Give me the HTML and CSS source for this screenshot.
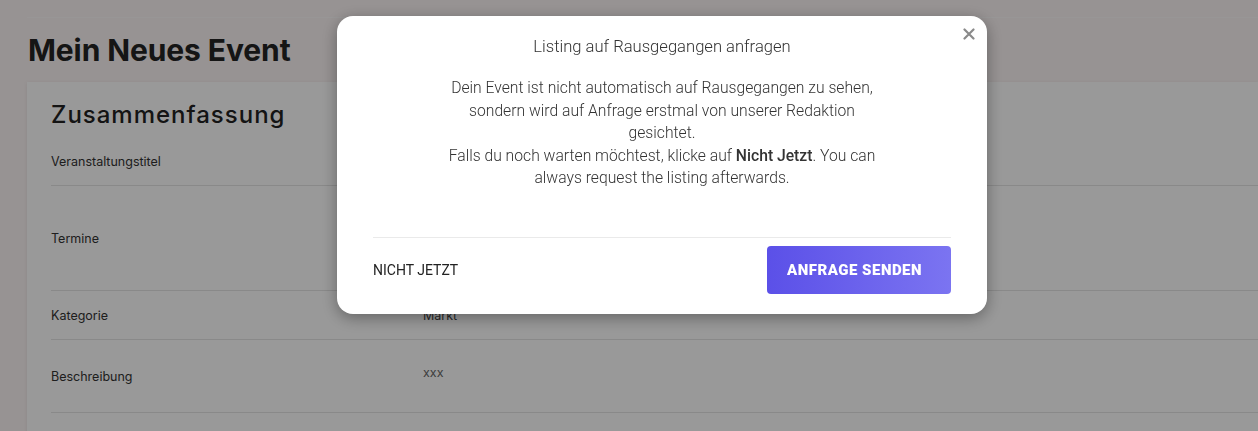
FILE: index.html
```html
<!DOCTYPE html>
<html lang="de">
<head>
  <meta charset="UTF-8" />
  <meta name="viewport" content="width=device-width, initial-scale=1" />
  <title>Mein Neues Event</title>
  <link rel="stylesheet" href="styles.css">
</head>
<body>
  <div class="page">
    <h1>Mein Neues Event</h1>

    <div class="card">
      <h2>Zusammenfassung</h2>

      <div class="row row-first">
        <span class="label">Veranstaltungstitel</span>
        <span class="value"></span>
      </div>
      <div class="row row-dates">
        <span class="label">Termine</span>
        <span class="value"></span>
      </div>
      <div class="row">
        <span class="label">Kategorie</span>
        <span class="value">Markt</span>
      </div>
      <div class="row row-desc">
        <span class="label">Beschreibung</span>
        <span class="value value-top">xxx</span>
      </div>
    </div>
  </div>

  <div class="overlay">
    <div class="modal">
      <button class="close" aria-label="Schließen">
        <svg width="12" height="12" viewBox="0 0 12 12"><path d="M1.5 1.5l9 9M10.5 1.5l-9 9" stroke="#8a8a8a" stroke-width="2.2" stroke-linecap="round"/></svg>
      </button>
      <p class="modal-title">Listing auf Rausgegangen anfragen</p>
      <p class="modal-text">
        Dein Event ist nicht automatisch auf Rausgegangen zu sehen,<br>
        sondern wird auf Anfrage erstmal von unserer Redaktion<br>
        gesichtet.<br>
        Falls du noch warten möchtest, klicke auf <b>Nicht Jetzt</b>. You can<br>
        always request the listing afterwards.
      </p>
      <div class="modal-footer">
        <button class="btn-link">NICHT JETZT</button>
        <button class="btn-primary">ANFRAGE SENDEN</button>
      </div>
    </div>
  </div>
</body>
</html>
```

FILE: styles.css
```css
* {
  box-sizing: border-box;
}

body {
  margin: 0;
  font-family: Inter, 'Noto Sans', sans-serif;
  background-color: #fcf5f5;
  color: #222;
  overflow: hidden;
}

.page {
  padding: 17px 0 0 27px;
}

h1 {
  margin: 0;
  border-top: 1px solid #fdfbfb;
  padding: 13px 0 13px 1px;
  font-size: 30px;
  font-weight: 700;
  line-height: 38px;
  letter-spacing: -0.1px;
  color: #232323;
}

.card {
  background: #fff;
  box-shadow: 0 1px 4px rgba(0, 0, 0, 0.08);
  padding: 18px 0 0 24px;
  min-height: 360px;
}

h2 {
  margin: 0;
  font-size: 24px;
  font-weight: 500;
  line-height: 30px;
  letter-spacing: 1px;
  color: #222;
}

.row {
  display: flex;
  align-items: center;
  border-bottom: 1px solid #e4e4e4;
  height: 49px;
  font-size: 12.5px;
  color: #333;
}

.row-first {
  margin-top: 7px;
}

.row-dates {
  height: 105px;
}

.row-desc {
  height: 73px;
}

.label {
  width: 372px;
}

.value {
  color: #444;
}

.value-top {
  align-self: flex-start;
  margin-top: 25px;
  color: #666;
}

.overlay {
  position: fixed;
  inset: 0;
  background: rgba(0, 0, 0, 0.4);
  display: flex;
  justify-content: center;
  align-items: flex-start;
  padding: 16px 0 0 66px;
}

.modal {
  position: relative;
  width: 650px;
  background: #fff;
  border-radius: 16px;
  box-shadow: 0 4px 16px rgba(0, 0, 0, 0.35);
  padding: 21px 36px 20px;
  font-family: Roboto, 'Noto Sans', sans-serif;
  font-weight: 300;
  color: #333;
  text-align: center;
}

.close {
  position: absolute;
  top: 12px;
  right: 12px;
  width: 12px;
  height: 12px;
  padding: 0;
  border: none;
  background: none;
  display: flex;
  cursor: pointer;
}

.modal-title {
  margin: 0;
  font-size: 16.6px;
  line-height: 20px;
}

.modal-text {
  margin: 20px 0 47px;
  font-size: 15.7px;
  line-height: 22.5px;
}

.modal-text b {
  font-weight: 500;
}

.modal-footer {
  border-top: 1px solid #eaeaea;
  padding-top: 8px;
  display: flex;
  justify-content: space-between;
  align-items: center;
}

.btn-link {
  border: none;
  background: none;
  padding: 0;
  font-family: Roboto, sans-serif;
  font-size: 14px;
  font-weight: 400;
  color: #222;
  cursor: pointer;
}

.btn-primary {
  width: 184px;
  height: 48px;
  border: none;
  border-radius: 4px;
  padding: 0 9px 0 0;
  background: linear-gradient(90deg, #5b50e8, #7b74f1);
  color: #fff;
  font-family: Roboto, sans-serif;
  font-size: 15px;
  font-weight: 900;
  letter-spacing: 0.5px;
  cursor: pointer;
}
```
